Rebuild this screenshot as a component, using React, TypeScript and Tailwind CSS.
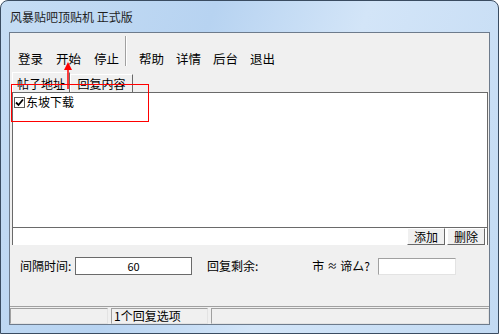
import React from 'react';

const TOOLS_LEFT = ['登录', '开始', '停止'];
const TOOLS_RIGHT = ['帮助', '详情', '后台', '退出'];

const sunken = 'border border-t-[#a0a0a0] border-l-[#a0a0a0] border-r-[#e3e3e3] border-b-[#e3e3e3]';
const raised = 'border border-t-white border-l-white border-r-[#696969] border-b-[#696969]';

const App: React.FC = () => {
  return (
    <div className="w-[499px] h-[334px] overflow-hidden bg-white font-['Noto_Sans_CJK_SC',sans-serif] text-[12px] leading-none text-black">
      <div className="relative w-[499px] h-[334px] rounded-t-[8px] border border-[#3a4c61] bg-[linear-gradient(110deg,#c6ddf4_0%,#b7d3f1_35%,#d3e5f8_60%,#c2daf3_100%)]">
        {/* Title bar */}
        <div className="h-[31px] pl-[9px] flex items-center">
          <span className="text-[12px] text-[#1e1e1e]">风暴贴吧顶贴机 正式版</span>
        </div>

        {/* Client area */}
        <div className="ml-[8px] w-[481px] h-[293px] border border-[#6d7b8c] bg-[#f0f0f0] flex flex-col">
          {/* Toolbar */}
          <div className="h-[39px] flex items-start pl-[8px] text-[12.5px]">
            {TOOLS_LEFT.map((t, i) => (
              <span key={t} className={`mt-[20px] ${i === 0 ? '' : 'ml-[13px]'}`}>{t}</span>
            ))}
            <div className="ml-[6px] mt-[3px] h-[30px] w-[2px] border-l border-[#a0a0a0] border-r border-r-white" />
            {TOOLS_RIGHT.map((t, i) => (
              <span key={t} className={`mt-[20px] ${i === 0 ? 'ml-[12px]' : 'ml-[12px]'}`}>{t}</span>
            ))}
          </div>

          {/* Tabs */}
          <div className="h-[20px] flex items-end pl-[2px]">
            <div className={`h-[20px] w-[58px] ${raised} border-b-0 flex items-center justify-center pt-[2px]`}>帖子地址</div>
            <div className={`h-[18px] w-[63px] ${raised} border-b-0 flex items-center justify-center`}>回复内容</div>
          </div>

          {/* Panel */}
          <div className="ml-[2px] w-[476px] h-[153px] bg-white border-l border-t border-r border-[#6a6a6a] flex flex-col">
            <div className="h-[135px] border-b border-[#6a6a6a] pl-[1px] pt-[3px]">
              <div className="flex items-center gap-[1px]">
                <span className="w-[11px] h-[11px] border border-[#5a5a5a] flex items-center justify-center">
                  <svg width="9" height="9" viewBox="0 0 9 9">
                    <path d="M1 4.5 L3.5 7 L8 1.5" stroke="#000" strokeWidth="1.8" fill="none" />
                  </svg>
                </span>
                <span className="text-[12px]">东坡下载</span>
              </div>
            </div>
            <div className="flex-1 flex justify-end items-start pr-[2px] gap-[2px]">
              <button className={`h-[17px] w-[38px] bg-[#f0f0f0] ${raised} flex items-center justify-center`}>添加</button>
              <button className={`h-[17px] w-[38px] bg-[#f0f0f0] ${raised} flex items-center justify-center`}>删除</button>
            </div>
          </div>

          {/* Inputs row */}
          <div className="mt-[12px] h-[18px] flex items-center pl-[10px]">
            <span className="w-[55px]">间隔时间:</span>
            <div className="w-[117px] h-[18px] bg-white border border-[#6a6a6a] flex items-center justify-center text-[11px]">60</div>
            <span className="ml-[15px]">回复剩余:</span>
            <span className="ml-[54px] flex items-center">市<span className="text-[10px] mx-[3px]">≈</span>谛厶?</span>
            <div className={`ml-[8px] w-[78px] h-[17px] bg-white ${sunken}`} />
          </div>

          {/* Status bar */}
          <div className="mt-auto border-t border-[#a0a0a0] h-[18px] flex items-end gap-[3px]">
            <div className={`w-[98px] h-[16px] ${sunken}`} />
            <div className={`w-[97px] h-[16px] ${sunken} flex items-center pl-[2px]`}>1个回复选项</div>
            <div className={`flex-1 h-[16px] ${sunken}`} />
          </div>
        </div>

        {/* Annotation overlay */}
        <div className="absolute left-[10px] top-[83px] w-[138px] h-[38px] border-[1.5px] border-[#ff0000]" />
        <svg className="absolute left-[61px] top-[61px]" width="12" height="28" viewBox="0 0 12 28">
          <path d="M6 0 L10 8 L2 8 Z" fill="#ff0000" />
          <line x1="6" y1="7" x2="6" y2="27" stroke="#ff0000" strokeWidth="1.5" />
        </svg>
      </div>
    </div>
  );
};

export default App;
